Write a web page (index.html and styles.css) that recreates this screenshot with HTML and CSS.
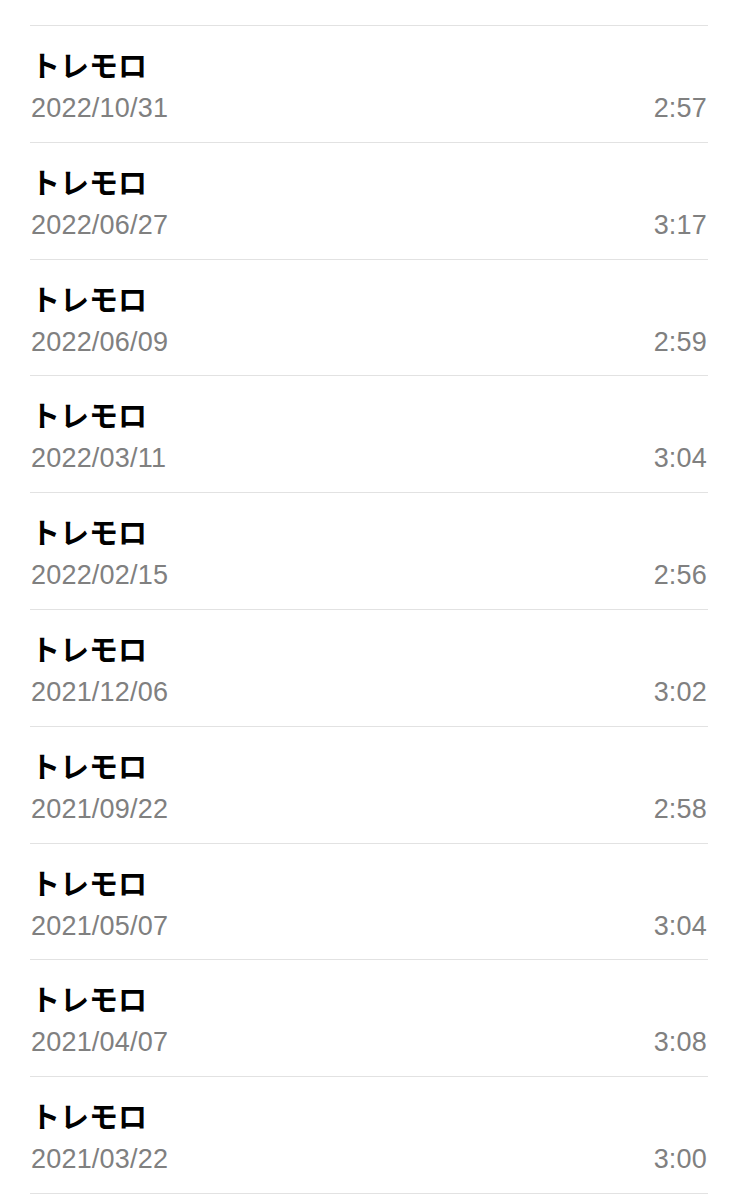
FILE: index.html
```html
<!DOCTYPE html>
<html lang="ja">

<head>
  <meta charset="UTF-8" />
  <meta name="viewport" content="width=device-width, initial-scale=1" />
  <title>トレモロ</title>
  <link rel="stylesheet" href="styles.css">
</head>

<body>

  <ul class="list">
    <li class="item">
      <div class="title">トレモロ</div>
      <div class="meta"><span>2022/10/31</span><span>2:57</span></div>
    </li>
    <li class="item">
      <div class="title">トレモロ</div>
      <div class="meta"><span>2022/06/27</span><span>3:17</span></div>
    </li>
    <li class="item">
      <div class="title">トレモロ</div>
      <div class="meta"><span>2022/06/09</span><span>2:59</span></div>
    </li>
    <li class="item">
      <div class="title">トレモロ</div>
      <div class="meta"><span>2022/03/11</span><span>3:04</span></div>
    </li>
    <li class="item">
      <div class="title">トレモロ</div>
      <div class="meta"><span>2022/02/15</span><span>2:56</span></div>
    </li>
    <li class="item">
      <div class="title">トレモロ</div>
      <div class="meta"><span>2021/12/06</span><span>3:02</span></div>
    </li>
    <li class="item">
      <div class="title">トレモロ</div>
      <div class="meta"><span>2021/09/22</span><span>2:58</span></div>
    </li>
    <li class="item">
      <div class="title">トレモロ</div>
      <div class="meta"><span>2021/05/07</span><span>3:04</span></div>
    </li>
    <li class="item">
      <div class="title">トレモロ</div>
      <div class="meta"><span>2021/04/07</span><span>3:08</span></div>
    </li>
    <li class="item">
      <div class="title">トレモロ</div>
      <div class="meta"><span>2021/03/22</span><span>3:00</span></div>
    </li>
  </ul>

</body>

</html>
```

FILE: styles.css
```css
* {
  margin: 0;
  padding: 0;
  box-sizing: border-box;
}

body {
  background-color: #fff;
  font-family: 'Liberation Sans', 'Noto Sans CJK JP', sans-serif;
  color: #000;
}

.list {
  list-style: none;
  margin: 0 30px;
  padding-top: 25px;
}

.item {
  height: 116.8px;
  border-top: 1px solid #e2e2e2;
  padding: 20px 1px 0 1px;
}

.item:last-child {
  height: 117.8px;
  border-bottom: 1px solid #e2e2e2;
}

.title {
  font-family: 'Noto Sans CJK JP', sans-serif;
  font-weight: 700;
  font-size: 29px;
  line-height: 36px;
}

.meta {
  display: flex;
  justify-content: space-between;
  margin-top: 10px;
  font-size: 27px;
  line-height: 32px;
  letter-spacing: 0.2px;
  color: #808080;
}
```
